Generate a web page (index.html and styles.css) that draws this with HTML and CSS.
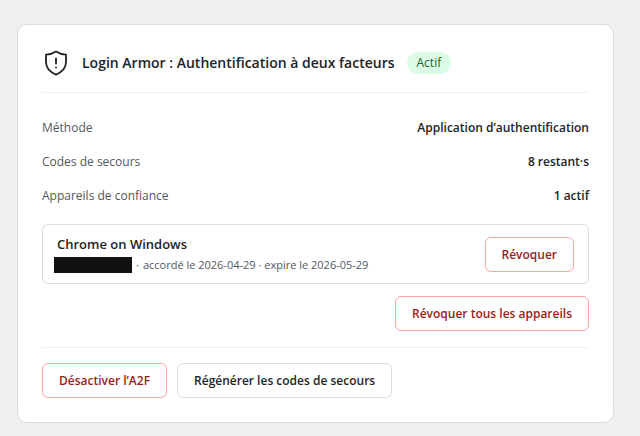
FILE: index.html
```
<!DOCTYPE html>
<html lang="fr">
  <head>
    <meta charset="utf-8">
    <meta name="viewport" content="width=device-width, initial-scale=1">
    <title>Login Armor</title>
    <link rel="stylesheet" href="styles.css">
  </head>
  <body>
    <section class="card">
      <header class="card-header">
        <svg class="shield" viewBox="0 0 28 28" fill="none" stroke="currentColor" stroke-width="1.8" stroke-linecap="round" stroke-linejoin="round" aria-hidden="true">
          <path d="M14 2.500C11.200 4.400 8 5.400 4 5.600V13C4 19 8 23 14 25.600C20 23 24 19 24 13V5.600C20 5.400 16.800 4.400 14 2.500Z"/>
          <path d="M14 9.500V14.500"/>
          <path d="M14 18.500V18.600"/>
        </svg>
        <h1>Login Armor : Authentification à deux facteurs</h1>
        <span class="badge">Actif</span>
      </header>

      <dl class="details">
        <div class="row">
          <dt>Méthode</dt>
          <dd>Application d’authentification</dd>
        </div>
        <div class="row">
          <dt>Codes de secours</dt>
          <dd>8 restant·s</dd>
        </div>
        <div class="row">
          <dt>Appareils de confiance</dt>
          <dd>1 actif</dd>
        </div>
      </dl>

      <div class="device">
        <div class="device-info">
          <h2>Chrome on Windows</h2>
          <p class="meta"><span class="redacted"></span><span>·</span><span>accordé le 2026-04-29 · expire le 2026-05-29</span></p>
        </div>
        <button type="button" class="btn btn-danger">Révoquer</button>
      </div>
      <div class="revoke-all">
        <button type="button" class="btn btn-danger">Révoquer tous les appareils</button>
      </div>

      <footer class="actions">
        <button type="button" class="btn btn-danger">Désactiver l’A2F</button>
        <button type="button" class="btn">Régénérer les codes de secours</button>
      </footer>
    </section>
  </body>
</html>
```
FILE: styles.css
```
* {
  box-sizing: border-box;
}
body {
  margin: 0;
  padding: 24px 26px 12px 17px;
  background: #efefef;
  color: #1d2327;
  font-family: "Segoe UI", "Open Sans", "Noto Sans", sans-serif;
  font-size: 12px;
}
h1, h2, p, dl, dd {
  margin: 0;
}
.card {
  padding: 24px;
  background: #fff;
  border: 1px solid #dcdcde;
  border-radius: 10px;
}
.card-header {
  display: flex;
  align-items: center;
  gap: 12px;
  padding-bottom: 15px;
  border-bottom: 1px solid #f0f0f1;
}
.shield {
  flex: none;
  width: 28px;
  height: 28px;
}
h1 {
  font-size: 14px;
  font-weight: 600;
  line-height: 24px;
}
.badge {
  padding: 0 10px;
  border-radius: 11px;
  background: #dcfce7;
  color: #166534;
  font-weight: 500;
  line-height: 22px;
}
.details {
  margin: 17px 0 12px;
}
.row {
  display: flex;
  justify-content: space-between;
  align-items: center;
  height: 34px;
}
dt {
  color: #50575e;
}
dd {
  font-weight: 600;
}
.device {
  display: flex;
  justify-content: space-between;
  align-items: center;
  padding: 8px 14px;
  border: 1px solid #dcdcde;
  border-radius: 6px;
}
h2 {
  font-size: 13px;
  font-weight: 600;
  line-height: 22px;
}
.meta {
  display: flex;
  align-items: center;
  gap: 4px;
  color: #50575e;
  font-size: 11px;
  line-height: 20px;
}
.redacted {
  width: 78px;
  height: 16px;
  margin-left: -3px;
  background: #111;
}
.btn {
  height: 35px;
  padding: 0 16px;
  background: #fff;
  border: 1px solid #dcdcde;
  border-radius: 6px;
  color: #1d2327;
  font-family: inherit;
  font-size: 12px;
  font-weight: 600;
  cursor: pointer;
}
.btn-danger {
  border-color: #fca5a5;
  color: #991b1b;
}
.revoke-all {
  display: flex;
  justify-content: flex-end;
  margin-top: 12px;
}
.actions {
  display: flex;
  flex-wrap: wrap;
  gap: 10px;
  margin-top: 16px;
  padding-top: 15px;
  border-top: 1px solid #f0f0f1;
}
```
